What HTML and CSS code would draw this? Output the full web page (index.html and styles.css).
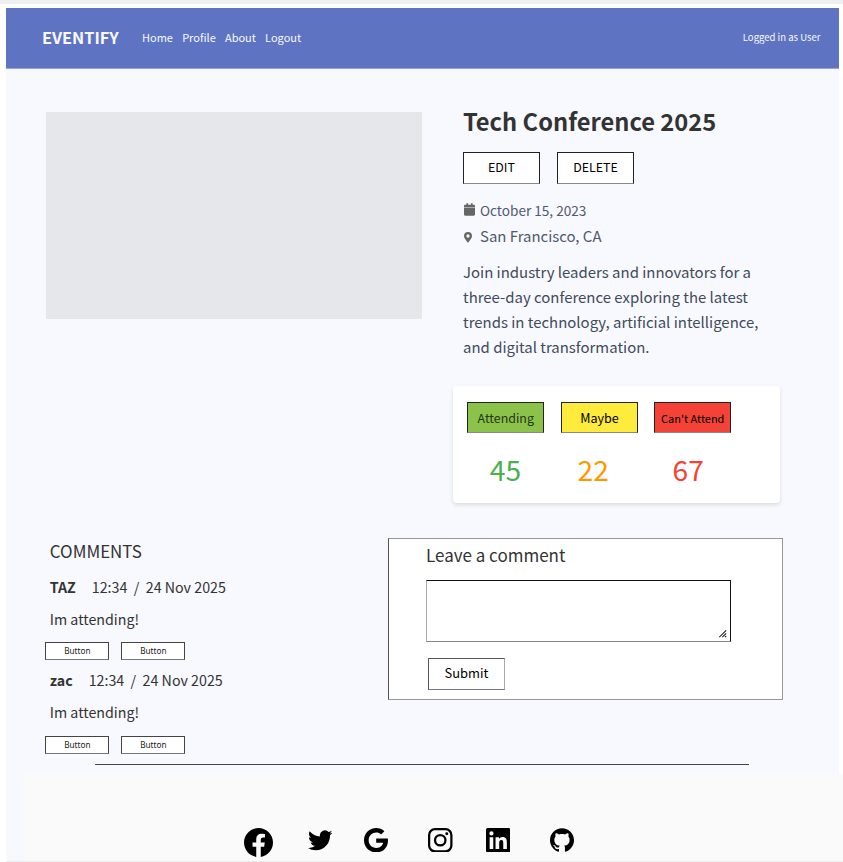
FILE: index.html
```
<!DOCTYPE html>
<html lang="en">
<head>
<meta charset="utf-8">
<title>Eventify</title>
<link rel="stylesheet" href="styles.css">
</head>
<body>
<div class="strip"></div>
<div class="page">
  <header class="navbar">
    <span class="brand">EVENTIFY</span>
    <nav class="links"><a>Home</a><a>Profile</a><a>About</a><a>Logout</a></nav>
    <span class="user">Logged in as User</span>
  </header>

  <section class="event">
    <div class="photo"></div>
    <div class="details">
      <h1>Tech Conference 2025</h1>
      <div class="actions"><button class="btn">EDIT</button><button class="btn">DELETE</button></div>
      <div class="meta date">
        <svg width="11" height="13" viewBox="0 0 448 512"><path fill="#666" d="M0 176h448v288c0 26-22 48-48 48H48c-26 0-48-22-48-48zM448 150v-38c0-26-22-48-48-48h-48V14c0-8-6-14-14-14h-44c-8 0-14 6-14 14v50H168V14c0-8-6-14-14-14h-44c-8 0-14 6-14 14v50H48C22 64 0 86 0 112v38z"/></svg>
        <span>October 15, 2023</span>
      </div>
      <div class="meta place">
        <svg width="8" height="10.6" viewBox="0 0 384 512"><path fill="#666" d="M172 502C27 291 0 270 0 192a192 192 0 11384 0c0 78-27 99-172 310-10 13-30 13-40 0zm20-230a80 80 0 100-160 80 80 0 000 160z"/></svg>
        <span>San Francisco, CA</span>
      </div>
      <p class="about">Join industry leaders and innovators for a<br>three-day conference exploring the latest<br>trends in technology, artificial intelligence,<br>and digital transformation.</p>
      <div class="rsvp">
        <div class="choice"><button class="btn going">Attending</button><span class="count green">45</span></div>
        <div class="choice"><button class="btn maybe">Maybe</button><span class="count orange">22</span></div>
        <div class="choice"><button class="btn no">Can't Attend</button><span class="count red">67</span></div>
      </div>
    </div>
  </section>

  <section class="discussion">
    <div class="comments">
      <h2>COMMENTS</h2>
      <article class="comment">
        <div class="head"><b>TAZ</b><span>12:34&nbsp; /&nbsp; 24 Nov 2025</span></div>
        <p>Im attending!</p>
        <div class="tools"><button>Button</button><button>Button</button></div>
      </article>
      <article class="comment second">
        <div class="head"><b>zac</b><span>12:34&nbsp; /&nbsp; 24 Nov 2025</span></div>
        <p>Im attending!</p>
        <div class="tools"><button>Button</button><button>Button</button></div>
      </article>
    </div>
    <form class="reply">
      <label>Leave a comment</label>
      <div class="field">
        <svg width="8" height="8" viewBox="0 0 8 8" stroke="#222" fill="none"><path d="M.3 7.2L7.2.3M3.3 7.2l3.9-3.9M6 7.2l1.2-1.2" stroke-width="1.1"/></svg>
      </div>
      <button type="button" class="btn submit">Submit</button>
    </form>
  </section>
  <hr class="rule">
</div>

<footer class="footer">
  <svg class="fb" viewBox="0 0 24 24"><path d="M24 12.073c0-6.627-5.373-12-12-12s-12 5.373-12 12c0 5.99 4.388 10.954 10.125 11.854v-8.385H7.078v-3.47h3.047V9.43c0-3.007 1.792-4.669 4.533-4.669 1.312 0 2.686.235 2.686.235v2.953H15.83c-1.491 0-1.956.925-1.956 1.874v2.25h3.328l-.532 3.47h-2.796v8.385C19.612 23.027 24 18.062 24 12.073z"/></svg>
  <svg class="tw" viewBox="0 0 24 24"><path d="M23.953 4.57a10 10 0 01-2.825.775 4.958 4.958 0 002.163-2.723c-.951.555-2.005.959-3.127 1.184a4.92 4.92 0 00-8.384 4.482C7.69 8.095 4.067 6.13 1.64 3.162a4.822 4.822 0 00-.666 2.475c0 1.71.87 3.213 2.188 4.096a4.904 4.904 0 01-2.228-.616v.06a4.923 4.923 0 003.946 4.827 4.996 4.996 0 01-2.212.085 4.936 4.936 0 004.604 3.417 9.867 9.867 0 01-6.102 2.105c-.39 0-.779-.023-1.17-.067a13.995 13.995 0 007.557 2.209c9.053 0 13.998-7.496 13.998-13.985 0-.21 0-.42-.015-.63A9.935 9.935 0 0024 4.59z"/></svg>
  <svg class="gg" viewBox="0 8 488 496"><path d="M488 261.8C488 403.3 391.1 504 248 504 110.8 504 0 393.2 0 256S110.8 8 248 8c66.8 0 123 24.5 166.3 64.9l-67.5 64.9C258.5 52.6 94.3 116.6 94.3 256c0 86.5 69.1 156.6 153.7 156.6 98.2 0 135-70.4 140.8-106.9H248v-85.3h236.1c2.3 12.7 3.9 24.9 3.9 41.4z"/></svg>
  <svg class="ig" viewBox="0 0 24 24"><rect x="1.1" y="1.1" width="21.8" height="21.8" rx="5.8" fill="none" stroke="#000" stroke-width="2.2"/><circle cx="12" cy="12" r="5.1" fill="none" stroke="#000" stroke-width="2.2"/><circle cx="18.4" cy="5.6" r="1.45"/></svg>
  <svg class="li" viewBox="0 0 24 24"><path d="M20.447 20.452h-3.554v-5.569c0-1.328-.027-3.037-1.852-3.037-1.853 0-2.136 1.445-2.136 2.939v5.667H9.351V9h3.414v1.561h.046c.477-.9 1.637-1.85 3.37-1.85 3.601 0 4.267 2.37 4.267 5.455v6.286zM5.337 7.433a2.062 2.062 0 01-2.063-2.065 2.064 2.064 0 112.063 2.065zm1.782 13.019H3.555V9h3.564v11.452zM22.225 0H1.771C.792 0 0 .774 0 1.729v20.542C0 23.227.792 24 1.771 24h20.451C23.2 24 24 23.227 24 22.271V1.729C24 .774 23.2 0 22.222 0h.003z"/></svg>
  <svg class="gh" viewBox="0 0 24 24"><path d="M12 .297c-6.63 0-12 5.373-12 12 0 5.303 3.438 9.8 8.205 11.385.6.113.82-.258.82-.577 0-.285-.01-1.04-.015-2.04-3.338.724-4.042-1.61-4.042-1.61C4.422 18.07 3.633 17.7 3.633 17.7c-1.087-.744.084-.729.084-.729 1.205.084 1.838 1.236 1.838 1.236 1.07 1.835 2.809 1.305 3.495.998.108-.776.417-1.305.76-1.605-2.665-.3-5.466-1.332-5.466-5.93 0-1.31.465-2.38 1.235-3.22-.135-.303-.54-1.523.105-3.176 0 0 1.005-.322 3.3 1.23.96-.267 1.98-.399 3-.405 1.02.006 2.04.138 3 .405 2.28-1.552 3.285-1.23 3.285-1.23.645 1.653.24 2.873.12 3.176.765.84 1.23 1.91 1.23 3.22 0 4.61-2.805 5.625-5.475 5.92.42.36.81 1.096.81 2.22 0 1.606-.015 2.896-.015 3.286 0 .315.21.69.825.57C20.565 22.092 24 17.592 24 12.297c0-6.627-5.373-12-12-12"/></svg>
</footer>
</body>
</html>
```
FILE: styles.css
```
* { box-sizing: border-box; }
body {
  margin: 0;
  width: 843px;
  height: 862px;
  overflow: hidden;
  background: #fff;
  color: #333;
  font-family: "Noto Sans CJK SC", "Noto Sans", sans-serif;
}
h1, h2, p { margin: 0; font-weight: 400; }
button { font-family: inherit; padding: 0; margin: 0; border-radius: 0; }

.strip { height: 8px; background: #fff; border-top: 4px solid #efefef; }
.page { margin: 0 4px 0 6px; height: 765.5px; background: #f8f9fe; }

.navbar {
  display: flex;
  align-items: center;
  height: 61px;
  padding: 0 18.5px 2px 36px;
  border-bottom: 1px solid #98a5d8;
  background: #5e73c2;
  background-clip: padding-box;
  color: #f8f9fe;
}
.brand { width: 100px; font-size: 16.3px; font-weight: 700; line-height: 24px; }
.links { display: flex; gap: 9.2px; font-size: 11px; line-height: 20px; }
.user { margin-left: auto; font-size: 9.55px; line-height: 16px; }

.event { display: flex; gap: 31px; padding: 35px 0 0 40px; height: 449.5px; }
.photo { width: 376px; height: 207px; margin-top: 8px; background: #e5e7eb; }
.details { width: 327.4px; }
.details > :not(.rsvp) { margin-left: 10px; }
h1 { padding-top: 1px; font-size: 23.7px; font-weight: 700; line-height: 32px; }
.actions { display: flex; gap: 17px; margin-top: 15px; }
.btn {
  width: 77px;
  height: 32px;
  padding-bottom: 2px;
  border: 1px solid #222;
  border-bottom-color: #888;
  background: #fff;
  color: #000;
  font-size: 12.4px;
  line-height: 28px;
  white-space: nowrap;
}
.meta { display: flex; align-items: center; color: #4f5b6c; line-height: 24px; }
.date { margin-top: 14px; font-size: 13.6px; gap: 5.5px; }
.date svg { margin: -1px 0 0 .5px; }
.place { margin-top: 2px; font-size: 14.93px; gap: 8px; }
.place svg { margin: 3px 0 0 1px; }
.about { margin-top: 11px; font-size: 14.95px; line-height: 25px; color: #414b5b; white-space: nowrap; }

.rsvp {
  display: flex;
  gap: 16.5px;
  height: 117px;
  margin-top: 27px;
  padding: 16px 14px;
  border-radius: 4px;
  background: #fff;
  box-shadow: 0 2px 4px rgba(0, 0, 0, .12);
}
.rsvp .btn { padding: 1px 0 0 .5px; height: 31px; }
.choice { display: flex; flex-direction: column; width: 77px; }
.going { background: #8bc34a; color: #263314; }
.rsvp .maybe { background: #ffeb3b; font-size: 12.6px; padding-left: 1px; }
.no { background: #f44336; font-size: 10.95px; }
.count { font-size: 28.2px; line-height: 40px; margin-top: 16px; text-align: center; }
.green { color: #4caf50; }
.orange { color: #ff9800; padding-right: 11.5px; }
.red { color: #f44336; padding-right: 8.5px; }

.discussion { display: flex; height: 237px; padding: 19.5px 0 0 39px; }
.comments { width: 343px; }
h2 { padding-left: 4.8px; font-size: 16.95px; line-height: 26px; }
.comment { margin-top: 9.5px; }
.second { margin-top: 8.5px; }
.head { display: flex; gap: 16px; padding-left: 4.8px; font-size: 14.25px; line-height: 25px; }
.head b { font-size: 14.2px; padding-top: 1px; }
.comment p { margin-top: 6.5px; padding-left: 4.8px; font-size: 14.25px; line-height: 25px; }
.tools { display: flex; gap: 12px; margin-top: 10.5px; }
.second .head { line-height: 24px; }
.second .head b { padding-top: 0; }
.second p { margin-top: 7px; }
.second .tools { margin-top: 12px; }
.tools button {
  width: 64px;
  height: 18px;
  padding-left: .7px;
  border: 1px solid #444;
  border-bottom-color: #777;
  background: #fff;
  color: #222;
  font: 8.2px/14px "Noto Sans", sans-serif;
}

.reply {
  width: 395px;
  height: 161.5px;
  padding: 3px 0 0 37px;
  border: 1px solid #999;
  border-left-color: #555;
  background: #fff;
}
.reply label { display: block; font-size: 17px; line-height: 26px; }
.field {
  display: flex;
  align-items: flex-end;
  justify-content: flex-end;
  width: 305px;
  height: 62px;
  margin-top: 12px;
  padding: 3px;
  border: 1px solid #111;
  border-left-color: #aaa;
  border-bottom-color: #888;
}
.submit { display: block; margin: 16px 0 0 2px; font-size: 12.9px; border-color: #555 #aaa #777 #555; }

.rule { width: 654px; height: 1px; margin: 8.6px 0 0 89px; border: 0; background: #444; }

.footer {
  display: flex;
  align-items: flex-start;
  height: 88px;
  margin-left: 6px;
  padding: 54px 0 0 238px;
  border-bottom: 1px solid #ebebeb;
  background: linear-gradient(90deg, #f8f9fe 17px, #fafafa 19px);
}
.footer svg { width: 24.5px; height: 24.5px; flex: none; }
.footer .fb { width: 29px; height: 29px; }
.footer .tw { margin-left: 34.5px; }
.footer .gg { margin-left: 32px; width: 24px; }
.footer .ig { margin-left: 40px; }
.footer .li { margin-left: 33px; }
.footer .gh { margin-left: 39.5px; width: 24px; height: 24px; }
```
